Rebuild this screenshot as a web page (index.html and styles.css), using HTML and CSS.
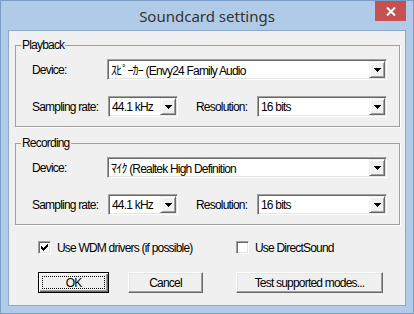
FILE: index.html
```html
<!DOCTYPE html>
<html lang="en">
<head>
    <meta charset="UTF-8">
    <title>Soundcard settings</title>
    <link rel="stylesheet" href="styles.css">
</head>
<body>
    <div class="window">
        <div class="titlebar">
            <span class="title">Soundcard settings</span>
            <span class="close">
                <svg width="10" height="9" viewBox="0 0 10 9"><path d="M1 0.5l8 8M9 0.5l-8 8" stroke="#fff" stroke-width="2"/></svg>
            </span>
        </div>
        <div class="client">
            <fieldset class="group">
                <legend>Playback</legend>
                <div class="row">
                    <span class="label label-device">Device:</span>
                    <div class="combo combo-wide">
                        <span class="value">ｽﾋﾟｰｶｰ (Envy24 Family Audio</span>
                        <span class="drop"><svg width="7" height="4" viewBox="0 0 7 4"><path d="M0 0h7v1h-1v1h-1v1h-1v1h-1v-1h-1v-1h-1v-1h-1z"/></svg></span>
                    </div>
                </div>
                <div class="row">
                    <span class="label label-rate">Sampling rate:</span>
                    <div class="combo combo-rate">
                        <span class="value">44.1 kHz</span>
                        <span class="drop"><svg width="7" height="4" viewBox="0 0 7 4"><path d="M0 0h7v1h-1v1h-1v1h-1v1h-1v-1h-1v-1h-1v-1h-1z"/></svg></span>
                    </div>
                    <span class="label label-res">Resolution:</span>
                    <div class="combo combo-wide">
                        <span class="value">16 bits</span>
                        <span class="drop"><svg width="7" height="4" viewBox="0 0 7 4"><path d="M0 0h7v1h-1v1h-1v1h-1v1h-1v-1h-1v-1h-1v-1h-1z"/></svg></span>
                    </div>
                </div>
            </fieldset>

            <fieldset class="group group-rec">
                <legend>Recording</legend>
                <div class="row">
                    <span class="label label-device">Device:</span>
                    <div class="combo combo-wide">
                        <span class="value">ﾏｲｸ (Realtek High Definition</span>
                        <span class="drop"><svg width="7" height="4" viewBox="0 0 7 4"><path d="M0 0h7v1h-1v1h-1v1h-1v1h-1v-1h-1v-1h-1v-1h-1z"/></svg></span>
                    </div>
                </div>
                <div class="row">
                    <span class="label label-rate">Sampling rate:</span>
                    <div class="combo combo-rate">
                        <span class="value">44.1 kHz</span>
                        <span class="drop"><svg width="7" height="4" viewBox="0 0 7 4"><path d="M0 0h7v1h-1v1h-1v1h-1v1h-1v-1h-1v-1h-1v-1h-1z"/></svg></span>
                    </div>
                    <span class="label label-res">Resolution:</span>
                    <div class="combo combo-wide">
                        <span class="value">16 bits</span>
                        <span class="drop"><svg width="7" height="4" viewBox="0 0 7 4"><path d="M0 0h7v1h-1v1h-1v1h-1v1h-1v-1h-1v-1h-1v-1h-1z"/></svg></span>
                    </div>
                </div>
            </fieldset>

            <div class="checks">
                <label class="check check-wdm">
                    <span class="box"><svg width="7" height="7" viewBox="0 0 7 7"><path d="M0 2h1v1h1v1h1v-1h1v-1h1v-1h1v-1h1v3h-1v1h-1v1h-1v1h-1v1h-1v-1h-1v-1h-1v-1h-1z"/></svg></span>
                    Use WDM drivers (if possible)
                </label>
                <label class="check">
                    <span class="box"></span>
                    Use DirectSound
                </label>
            </div>

            <div class="buttons">
                <button class="btn btn-default btn-ok"><span class="focus">OK</span></button>
                <button class="btn btn-cancel">Cancel</button>
                <button class="btn btn-test">Test supported modes...</button>
            </div>
        </div>
    </div>
</body>
</html>
```

FILE: styles.css
```css
body {
    margin: 0;
}
.window {
    width: 414px;
    height: 314px;
    box-sizing: border-box;
    border: 1px solid #7b9cc4;
    background: #afcbe8;
    padding: 0 7px 7px;
    display: flex;
    flex-direction: column;
    font-family: "Liberation Sans", "Noto Sans CJK JP", sans-serif;
    font-size: 12px;
    letter-spacing: -0.8px;
    color: #000;
}
.titlebar {
    height: 29px;
    position: relative;
    display: flex;
    align-items: center;
    justify-content: center;
    letter-spacing: 0;
}
.title {
    font-family: "Noto Sans", sans-serif;
    font-size: 15px;
    color: #333;
    margin-top: 1px;
}
.close {
    position: absolute;
    top: 0;
    right: 0;
    width: 31px;
    height: 20px;
    background: #c75050;
    display: flex;
    align-items: center;
    justify-content: center;
}
.client {
    flex: 1;
    border: 1px solid #8ea9c8;
    background: #f0f0f0;
    padding: 0 5px 0 6px;
}
.group {
    margin: 7px 0 0;
    padding: 7px 12px 9px 5px;
    border: 1px solid #a0a0a0;
    box-shadow: 1px 1px 0 #fff;
    min-width: 0;
}
.group-rec {
    margin-top: 9px;
}
.group legend {
    padding: 0 1px;
    line-height: 14px;
}
.row {
    display: flex;
    align-items: center;
    height: 21px;
    margin-left: 11px;
}
.row + .row {
    margin-top: 16px;
}
.label {
    flex-shrink: 0;
    white-space: nowrap;
}
.label-device {
    width: 75px;
}
.label-rate {
    width: 76px;
}
.label-res {
    width: 61px;
    margin-left: 18px;
}
.combo {
    box-sizing: border-box;
    height: 21px;
    display: flex;
    align-items: center;
    background: #fff;
    border: 1px solid;
    border-color: #a0a0a0 #fff #fff #a0a0a0;
    box-shadow: inset 1px 1px 0 #696969, inset -1px -1px 0 #e3e3e3;
    padding: 1px;
}
.combo-wide {
    flex: 1;
}
.combo-rate {
    width: 70px;
    flex-shrink: 0;
}
.value {
    flex: 1;
    padding-left: 2px;
    white-space: nowrap;
    overflow: hidden;
}
.drop {
    box-sizing: border-box;
    width: 16px;
    height: 17px;
    flex-shrink: 0;
    background: #f0f0f0;
    border: 1px solid;
    border-color: #f0f0f0 #696969 #696969 #f0f0f0;
    box-shadow: inset 1px 1px 0 #fff, inset -1px -1px 0 #a0a0a0;
    display: flex;
    align-items: center;
    justify-content: center;
}
.checks {
    display: flex;
    margin: 16px 0 0 23px;
    height: 13px;
    align-items: center;
}
.check {
    display: flex;
    align-items: center;
    gap: 6px;
    white-space: nowrap;
}
.check-wdm {
    width: 198px;
}
.box {
    box-sizing: border-box;
    width: 13px;
    height: 13px;
    background: #fff;
    border: 1px solid;
    border-color: #a0a0a0 #fff #fff #a0a0a0;
    box-shadow: inset 1px 1px 0 #696969, inset -1px -1px 0 #e3e3e3;
    display: flex;
    align-items: center;
    justify-content: center;
}
.buttons {
    display: flex;
    margin: 18px 0 0 23px;
}
.btn {
    box-sizing: border-box;
    height: 21px;
    padding: 0;
    font: inherit;
    letter-spacing: inherit;
    color: #000;
    background: #f0f0f0;
    border: 1px solid;
    border-color: #fff #696969 #696969 #fff;
    box-shadow: inset -1px -1px 0 #a0a0a0, inset 1px 1px 0 #e3e3e3;
}
.btn-default {
    border-color: #000;
    box-shadow: inset 1px 1px 0 #fff, inset -1px -1px 0 #696969, inset -2px -2px 0 #a0a0a0;
    padding: 3px;
    display: flex;
}
.focus {
    flex: 1;
    border: 1px dotted #000;
    display: flex;
    align-items: center;
    justify-content: center;
}
.btn-ok {
    width: 71px;
}
.btn-cancel {
    width: 75px;
    margin-left: 19px;
}
.btn-test {
    width: 147px;
    margin-left: 33px;
}
```
